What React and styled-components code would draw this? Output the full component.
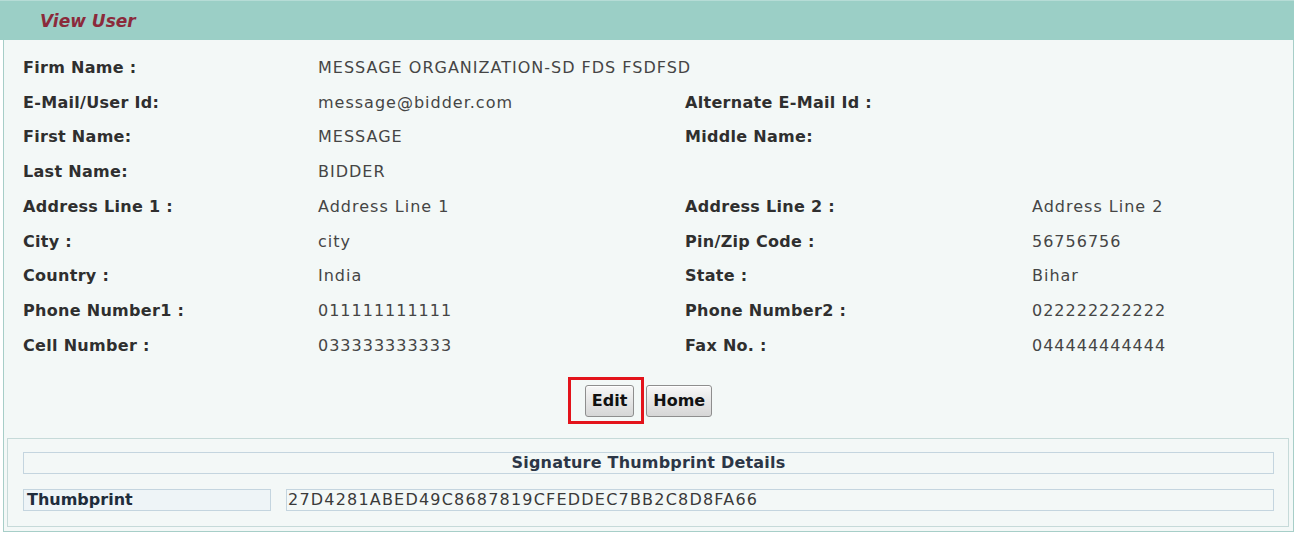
import React from "react";
import styled, { createGlobalStyle } from "styled-components";

const Global = createGlobalStyle`
  html, body { margin: 0; padding: 0; background: #ffffff; }
  body { font-family: "DejaVu Sans", Verdana, sans-serif; font-size: 16px; }
`;

const Panel = styled.div`
  width: 1294px;
`;

const Header = styled.div`
  height: 40px;
  background: #9bcfc6;
  border-top: 1px solid #b6dcd6;
  box-sizing: border-box;
  display: flex;
  align-items: center;
  padding-left: 40px;
`;

const Title = styled.h2`
  margin: 0;
  font-size: 17px;
  font-weight: bold;
  font-style: italic;
  color: #8b2a3b;
`;

const Body = styled.div`
  margin-left: 3px;
  border: 1px solid #a7cec8;
  border-top: none;
  background: #f3f8f7;
  padding: 10px 0 4px 0;
`;

const Details = styled.div`
  display: grid;
  grid-template-columns: 295px 367px 347px 1fr;
  grid-auto-rows: 34.75px;
  padding-left: 19px;
  align-items: center;
`;

const Label = styled.div`
  font-weight: bold;
  font-size: 16px;
  letter-spacing: 0.3px;
  color: #2f2f2f;
  white-space: nowrap;
`;

const Value = styled.div`
  font-size: 16px;
  letter-spacing: 1px;
  color: #454545;
  white-space: nowrap;
`;

const Actions = styled.div`
  display: flex;
  justify-content: center;
  gap: 12px;
  margin-top: 22px;
  margin-bottom: 21px;
`;

const ButtonWrap = styled.div`
  position: relative;
`;

const Highlight = styled.div`
  position: absolute;
  left: -17px;
  right: -10px;
  top: -8px;
  bottom: -7px;
  border: 3px solid #e3131b;
  pointer-events: none;
`;

const Button = styled.button`
  height: 32px;
  padding: 0 6px;
  font-family: "DejaVu Sans", Verdana, sans-serif;
  font-size: 16px;
  font-weight: bold;
  color: #111;
  background: linear-gradient(#f7f7f7, #d6d6d6);
  border: 1px solid #8e8e8e;
  border-radius: 3px;
  box-shadow: inset 0 1px 0 #fff;
`;

const Fieldset = styled.div`
  margin: 0 4px 0 3px;
  border: 1px solid #c6dad9;
  padding: 13px 14px 15px 15px;
  display: flex;
  flex-direction: column;
  gap: 15px;
`;

const SectionHead = styled.div`
  height: 22px;
  box-sizing: border-box;
  border: 1px solid #c4d5df;
  display: flex;
  align-items: center;
  justify-content: center;
  font-weight: bold;
  font-size: 16px;
  letter-spacing: 0.2px;
  color: #2c3646;
`;

const ThumbRow = styled.div`
  display: grid;
  grid-template-columns: 248px 1fr;
  gap: 15px;
`;

const Cell = styled.div`
  height: 22px;
  box-sizing: border-box;
  border: 1px solid #c4d5df;
  display: flex;
  align-items: center;
  font-size: 16px;
  padding-left: ${(p) => (p.$head ? "3px" : "1px")};
  font-weight: ${(p) => (p.$head ? "bold" : "normal")};
  letter-spacing: ${(p) => (p.$head ? "0" : "1.2px")};
  color: ${(p) => (p.$head ? "#1f2c3c" : "#3a3a3a")};
  background: ${(p) => (p.$head ? "#eef4f7" : "transparent")};
`;

const rows = [
  ["Firm Name :", "MESSAGE ORGANIZATION-SD FDS FSDFSD", null, null],
  ["E-Mail/User Id:", "message@bidder.com", "Alternate E-Mail Id :", ""],
  ["First Name:", "MESSAGE", "Middle Name:", ""],
  ["Last Name:", "BIDDER", "", ""],
  ["Address Line 1 :", "Address Line 1", "Address Line 2 :", "Address Line 2"],
  ["City :", "city", "Pin/Zip Code :", "56756756"],
  ["Country :", "India", "State :", "Bihar"],
  ["Phone Number1 :", "011111111111", "Phone Number2 :", "022222222222"],
  ["Cell Number :", "033333333333", "Fax No. :", "044444444444"],
];

export default function App() {
  return (
    <>
      <Global />
      <Panel>
        <Header>
          <Title>View User</Title>
        </Header>
        <Body>
          <Details>
            {rows.map((r, i) => (
              <React.Fragment key={i}>
                <Label>{r[0]}</Label>
                <Value>{r[1]}</Value>
                <Label>{r[2] || ""}</Label>
                <Value>{r[3] || ""}</Value>
              </React.Fragment>
            ))}
          </Details>
          <Actions>
            <ButtonWrap>
              <Button>Edit</Button>
              <Highlight />
            </ButtonWrap>
            <Button>Home</Button>
          </Actions>
          <Fieldset>
            <SectionHead>Signature Thumbprint Details</SectionHead>
            <ThumbRow>
              <Cell $head>Thumbprint</Cell>
              <Cell>27D4281ABED49C8687819CFEDDEC7BB2C8D8FA66</Cell>
            </ThumbRow>
          </Fieldset>
        </Body>
      </Panel>
    </>
  );
}
